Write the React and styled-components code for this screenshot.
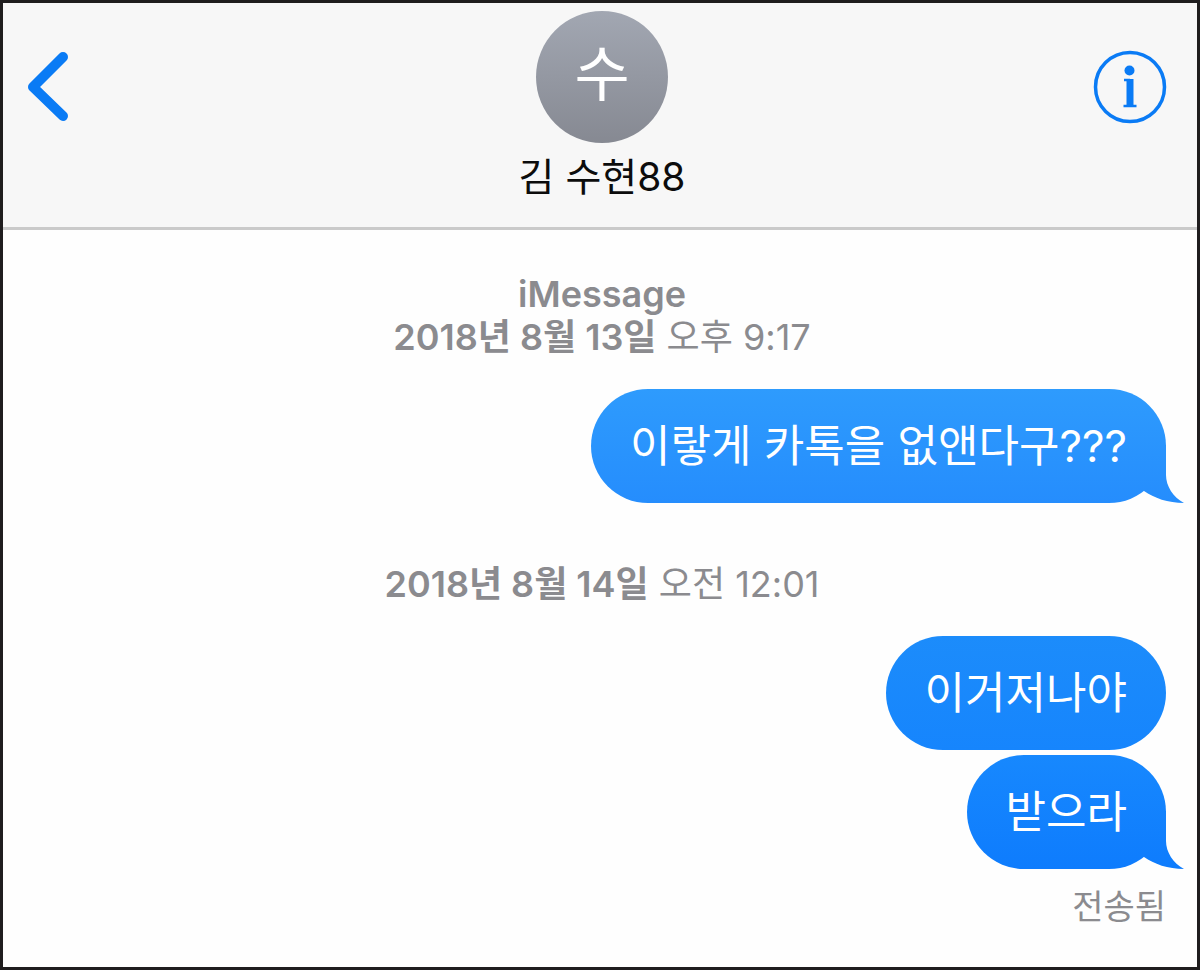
import { useId } from "react";
import styled, { createGlobalStyle } from "styled-components";

const GlobalStyle = createGlobalStyle`
  * {
    box-sizing: border-box;
    margin: 0;
    padding: 0;
  }

  body {
    background-color: #fefefe;
    font-family: Inter, "Noto Sans CJK KR", sans-serif;
  }
`;

const conversation = [
  {
    id: 1,
    service: "iMessage",
    date: "2018년 8월 13일",
    time: "오후 9:17",
    messages: [
      {
        text: "이랗게 카톡을 없앤다구???",
        from: "#2e9bfd",
        to: "#258dfd",
        tail: true,
      },
    ],
  },
  {
    id: 2,
    date: "2018년 8월 14일",
    time: "오전 12:01",
    messages: [
      { text: "이거저나야", from: "#1c8cfb", to: "#1685fd" },
      { text: "받으라", from: "#1788fe", to: "#0e7cfd", tail: true },
    ],
  },
];

const Screen = styled.div`
  display: flex;
  flex-direction: column;
  min-height: 100vh;
  border: 3px solid #1f1d1e;
  background-color: #fefefe;
`;

const Header = styled.header`
  display: grid;
  grid-template-columns: 1fr auto 1fr;
  align-items: start;
  padding: 8px 24px 26px;
  background-color: #f7f7f7;
  border-bottom: 3px solid #cacaca;
`;

const IconButton = styled.button`
  display: flex;
  margin-top: 38px;
  justify-self: ${({ $end }) => ($end ? "end" : "start")};
  background: none;
  border: none;
  color: #0a7bf5;
  cursor: pointer;
`;

const Contact = styled.div`
  display: flex;
  flex-direction: column;
  align-items: center;
  gap: 10px;
  padding-left: 4px;
`;

const Avatar = styled.div`
  display: flex;
  align-items: center;
  justify-content: center;
  width: 132px;
  height: 132px;
  padding-bottom: 6px;
  border-radius: 50%;
  background: linear-gradient(#a2a7b2, #868992);
  color: #fff;
  font-size: 60px;
  line-height: 64px;
`;

const Name = styled.h1`
  color: #0c0c0c;
  font-size: 39px;
  font-weight: 400;
  line-height: 48px;
`;

const Thread = styled.main`
  display: flex;
  flex-direction: column;
  gap: 60px;
  padding: 43px 31px 36px 35px;
`;

const Group = styled.section`
  display: flex;
  flex-direction: column;
  gap: 30px;
`;

const Stamp = styled.p`
  color: #8b8b8f;
  font-size: 36px;
  line-height: 43px;
  text-align: center;

  strong {
    font-weight: 600;
  }
`;

const Messages = styled.ul`
  display: flex;
  flex-direction: column;
  align-items: flex-end;
  gap: 5px;
  list-style: none;
`;

const Bubble = styled.li`
  position: relative;
  padding: 25px 39px;
  border-radius: 57px;
  background: linear-gradient(${({ $from, $to }) => `${$from}, ${$to}`});
  color: #fff;
  font-size: 44px;
  line-height: 64px;
`;

const TailSvg = styled.svg`
  position: absolute;
  right: -18px;
  bottom: 0;
`;

const Status = styled.p`
  margin-top: 16px;
  color: #8b8b8f;
  font-size: 34px;
  line-height: 43px;
  text-align: right;
`;

function Tail({ from, to }) {
  const id = useId();

  return (
    <TailSvg width="58" height="114" viewBox="0 0 58 114" aria-hidden="true">
      <defs>
        <linearGradient
          id={id}
          gradientUnits="userSpaceOnUse"
          x1="0"
          y1="0"
          x2="0"
          y2="114"
        >
          <stop stopColor={from} />
          <stop offset="1" stopColor={to} />
        </linearGradient>
      </defs>
      <path
        d="M40 56V86C40 97 47 108 58 114C42 114 28 109 18 102L6 80V56Z"
        fill={`url(#${id})`}
      />
    </TailSvg>
  );
}

function BackIcon() {
  return (
    <svg width="44" height="74" viewBox="0 0 44 74" fill="none">
      <path
        d="M36 8 6 38 36 67"
        stroke="currentColor"
        strokeWidth="10"
        strokeLinecap="round"
        strokeLinejoin="round"
      />
    </svg>
  );
}

function InfoIcon() {
  return (
    <svg width="80" height="76" viewBox="0 0 80 76" fill="none">
      <circle cx="37" cy="38" r="34.500" stroke="currentColor" strokeWidth="3.500" />
      <circle cx="36.500" cy="21.500" r="5" fill="currentColor" />
      <path d="M31 31H37M30.500 57H43.500" stroke="currentColor" strokeWidth="2.500" />
      <path d="M37 30V58" stroke="currentColor" strokeWidth="7" />
    </svg>
  );
}

function App() {
  return (
    <Screen>
      <GlobalStyle />
      <Header>
        <IconButton type="button" aria-label="뒤로">
          <BackIcon />
        </IconButton>
        <Contact>
          <Avatar>수</Avatar>
          <Name>김 수현88</Name>
        </Contact>
        <IconButton type="button" aria-label="정보" $end>
          <InfoIcon />
        </IconButton>
      </Header>
      <Thread>
        {conversation.map((group) => (
          <Group key={group.id}>
            <Stamp>
              {group.service && (
                <>
                  <strong>{group.service}</strong>
                  <br />
                </>
              )}
              <strong>{group.date}</strong> {group.time}
            </Stamp>
            <div>
              <Messages>
                {group.messages.map(({ text, from, to, tail }) => (
                  <Bubble key={text} $from={from} $to={to}>
                    {tail && <Tail from={from} to={to} />}
                    {text}
                  </Bubble>
                ))}
              </Messages>
              {group.id === conversation.length && <Status>전송됨</Status>}
            </div>
          </Group>
        ))}
      </Thread>
    </Screen>
  );
}

export default App;
